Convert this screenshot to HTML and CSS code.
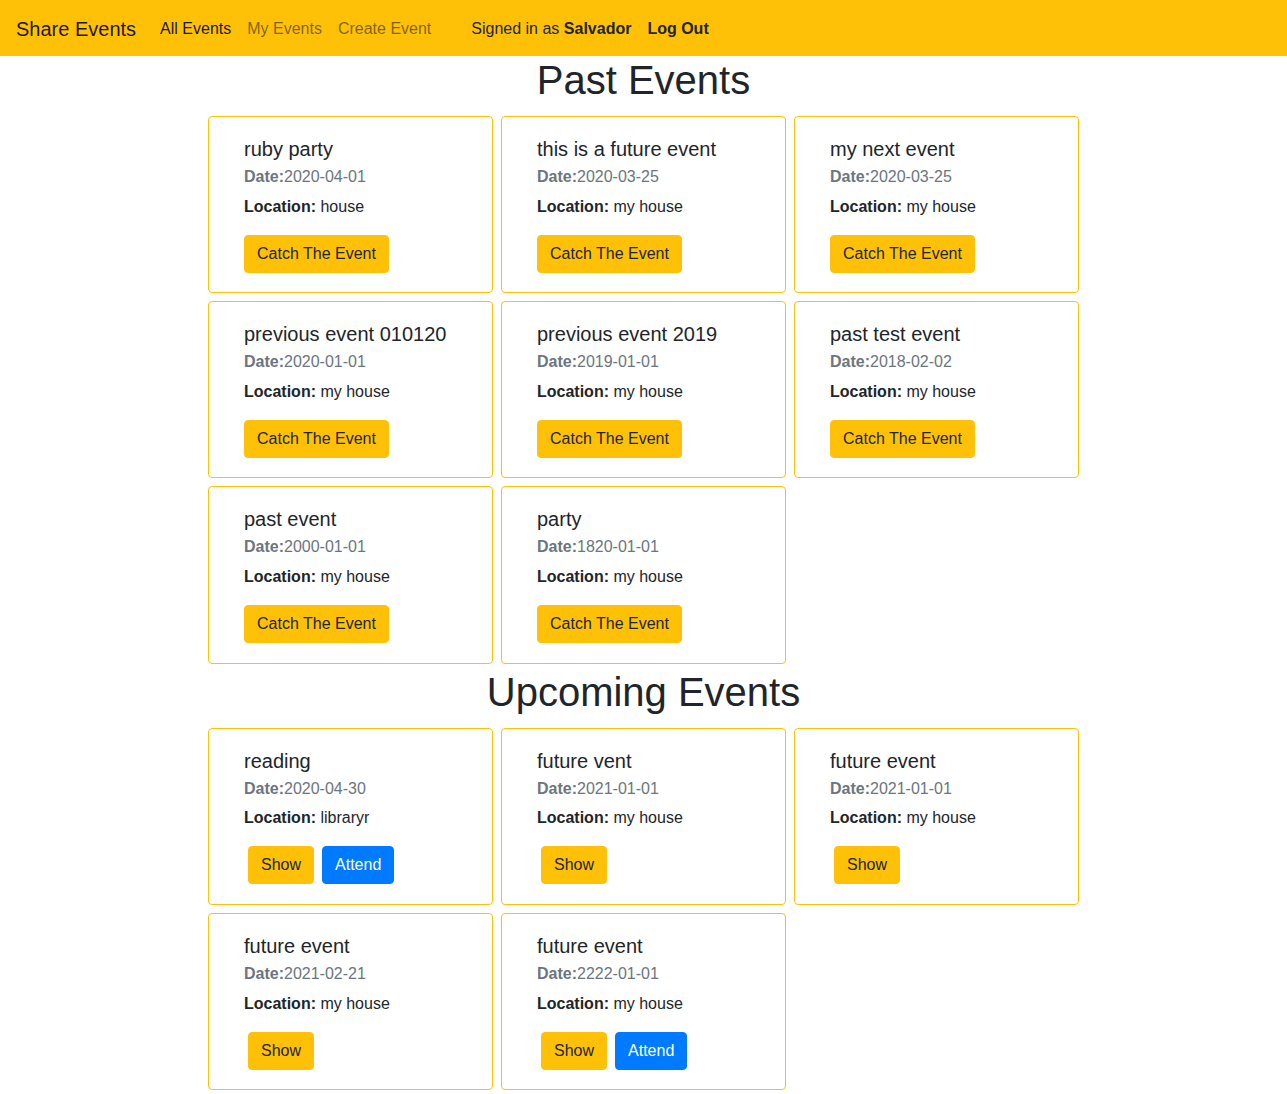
FILE: index.html
```
<!DOCTYPE html>
<html lang="en">
<head>
<meta charset="utf-8">
<title>Share Events</title>
<link rel="stylesheet" href="styles.css">
</head>
<body>
<nav class="navbar">
  <a class="brand" href="#">Share Events</a>
  <ul class="nav">
    <li><a class="nav-link active" href="#">All Events</a></li>
    <li><a class="nav-link" href="#">My Events</a></li>
    <li><a class="nav-link" href="#">Create Event</a></li>
  </ul>
  <span class="nav-text">Signed in as <strong>Salvador</strong></span>
  <a class="logout" href="#">Log Out</a>
</nav>

<main class="page">
  <h1 class="section-title">Past Events</h1>
  <div class="cards past">
    <div class="card"><h5 class="card-title">ruby party</h5><h6 class="card-date"><b>Date:</b>2020-04-01</h6><p class="card-loc"><b>Location:</b> house</p><div class="actions"><a class="btn btn-warning" href="#">Catch The Event</a></div></div>
    <div class="card"><h5 class="card-title">this is a future event</h5><h6 class="card-date"><b>Date:</b>2020-03-25</h6><p class="card-loc"><b>Location:</b> my house</p><div class="actions"><a class="btn btn-warning" href="#">Catch The Event</a></div></div>
    <div class="card"><h5 class="card-title">my next event</h5><h6 class="card-date"><b>Date:</b>2020-03-25</h6><p class="card-loc"><b>Location:</b> my house</p><div class="actions"><a class="btn btn-warning" href="#">Catch The Event</a></div></div>
    <div class="card"><h5 class="card-title">previous event 010120</h5><h6 class="card-date"><b>Date:</b>2020-01-01</h6><p class="card-loc"><b>Location:</b> my house</p><div class="actions"><a class="btn btn-warning" href="#">Catch The Event</a></div></div>
    <div class="card"><h5 class="card-title">previous event 2019</h5><h6 class="card-date"><b>Date:</b>2019-01-01</h6><p class="card-loc"><b>Location:</b> my house</p><div class="actions"><a class="btn btn-warning" href="#">Catch The Event</a></div></div>
    <div class="card"><h5 class="card-title">past test event</h5><h6 class="card-date"><b>Date:</b>2018-02-02</h6><p class="card-loc"><b>Location:</b> my house</p><div class="actions"><a class="btn btn-warning" href="#">Catch The Event</a></div></div>
    <div class="card"><h5 class="card-title">past event</h5><h6 class="card-date"><b>Date:</b>2000-01-01</h6><p class="card-loc"><b>Location:</b> my house</p><div class="actions"><a class="btn btn-warning" href="#">Catch The Event</a></div></div>
    <div class="card"><h5 class="card-title">party</h5><h6 class="card-date"><b>Date:</b>1820-01-01</h6><p class="card-loc"><b>Location:</b> my house</p><div class="actions"><a class="btn btn-warning" href="#">Catch The Event</a></div></div>
  </div>

  <h1 class="section-title">Upcoming Events</h1>
  <div class="cards upcoming">
    <div class="card"><h5 class="card-title">reading</h5><h6 class="card-date"><b>Date:</b>2020-04-30</h6><p class="card-loc"><b>Location:</b> libraryr</p><div class="actions spaced"><a class="btn btn-warning" href="#">Show</a><a class="btn btn-primary" href="#">Attend</a></div></div>
    <div class="card"><h5 class="card-title">future vent</h5><h6 class="card-date"><b>Date:</b>2021-01-01</h6><p class="card-loc"><b>Location:</b> my house</p><div class="actions spaced"><a class="btn btn-warning" href="#">Show</a></div></div>
    <div class="card"><h5 class="card-title">future event</h5><h6 class="card-date"><b>Date:</b>2021-01-01</h6><p class="card-loc"><b>Location:</b> my house</p><div class="actions spaced"><a class="btn btn-warning" href="#">Show</a></div></div>
    <div class="card"><h5 class="card-title">future event</h5><h6 class="card-date"><b>Date:</b>2021-02-21</h6><p class="card-loc"><b>Location:</b> my house</p><div class="actions spaced"><a class="btn btn-warning" href="#">Show</a></div></div>
    <div class="card"><h5 class="card-title">future event</h5><h6 class="card-date"><b>Date:</b>2222-01-01</h6><p class="card-loc"><b>Location:</b> my house</p><div class="actions spaced"><a class="btn btn-warning" href="#">Show</a><a class="btn btn-primary" href="#">Attend</a></div></div>
  </div>
</main>
</body>
</html>
```

FILE: styles.css
```
* { box-sizing: border-box; }

html, body {
  margin: 0;
  padding: 0;
}

body {
  font-family: "Liberation Sans", Arial, sans-serif;
  font-size: 16px;
  line-height: 1.5;
  color: #212529;
  background: #fff;
}

a { text-decoration: none; }

.navbar {
  display: flex;
  align-items: center;
  height: 56px;
  padding: 9px 16px 7px;
  background: #ffc107;
}

.brand {
  font-size: 20px;
  line-height: 30px;
  padding: 5px 0;
  margin-right: 16px;
  color: rgba(0, 0, 0, 0.9);
}

.nav {
  display: flex;
  list-style: none;
  margin: 0;
  padding: 0;
}

.nav-link {
  display: block;
  padding: 8px;
  color: rgba(0, 0, 0, 0.5);
}

.nav-link.active { color: rgba(0, 0, 0, 0.9); }

.nav-text {
  margin-left: 32px;
  color: #212529;
}

.nav-text strong { font-weight: 700; }

.logout {
  margin-left: 16px;
  font-weight: 700;
  color: #212529;
}

.page {
  width: 879px;
  margin: 0 auto;
}

.section-title {
  margin: 0 0 8px;
  font-size: 40px;
  font-weight: 500;
  line-height: 1.2;
  text-align: center;
}

.cards {
  display: flex;
  flex-wrap: wrap;
}

.card {
  width: 285px;
  margin: 4px;
  padding: 20px 20px 20px 35px;
  border: 1px solid #ffc107;
  border-radius: 4px;
  background: #fff;
}

.card-title {
  margin: 0 0 12px;
  font-size: 20px;
  font-weight: 400;
  line-height: 1.2;
}

.card-date {
  margin: -6px 0 8px;
  font-size: 16px;
  font-weight: 400;
  line-height: 1.2;
  color: #6c757d;
}

.card-date b { font-weight: 700; }

/* 1px nudge of the lower half in some rows, matching the reference's rounding */
.card.nudge { padding-bottom: 19px; }
.card.nudge .card-date { margin-bottom: 9px; }

.past .card:nth-child(-n+6),
.upcoming .card:nth-child(n+4) { padding-bottom: 19px; }

.past .card:nth-child(-n+6) .card-date,
.upcoming .card:nth-child(n+4) .card-date { margin-bottom: 9px; }

.card-loc {
  margin: 0 0 16px;
}

.card-loc b { font-weight: 700; }

.actions {
  display: flex;
}

.actions.spaced { gap: 8px; padding-left: 4px; }

.btn {
  display: inline-block;
  padding: 6px 12px;
  font-size: 16px;
  line-height: 24px;
  border-radius: 4px;
  border: 1px solid transparent;
}

.btn-warning {
  background: #ffc107;
  border-color: #ffc107;
  color: #212529;
}

.btn-primary {
  background: #007bff;
  border-color: #007bff;
  color: #fff;
}
```
